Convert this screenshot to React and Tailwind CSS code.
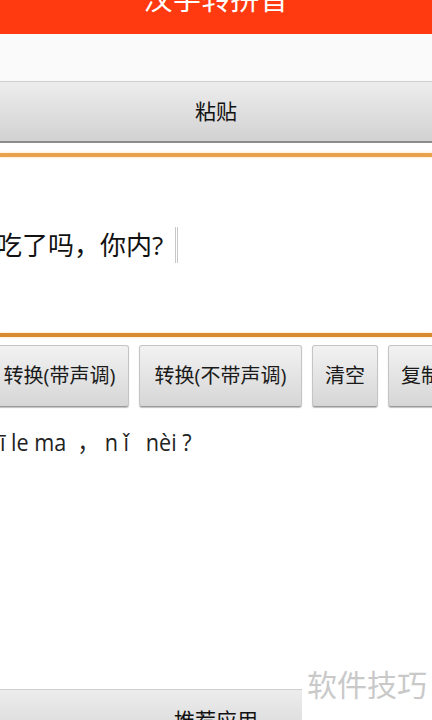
const font = { fontFamily: '"Open Sans", "Noto Sans CJK SC", sans-serif' };

function GreyButton({ children, className = '' }) {
  return (
    <div
      className={`flex h-[62px] shrink-0 items-center justify-center rounded-[3px] border border-[#c4c4c4] border-b-[#9a9a9a] bg-gradient-to-b from-[#f2f2f2] to-[#d6d6d6] text-[20px] text-[#1a1a1a] shadow-[0_1px_1px_rgba(0,0,0,0.25)] ${className}`}
    >
      {children}
    </div>
  );
}

export default function App() {
  return (
    <div className="relative h-[720px] w-[432px] overflow-hidden bg-white" style={font}>
      <div className="flex h-[751px] flex-col">
        <header className="flex h-[34px] shrink-0 justify-center overflow-hidden bg-[#ff3a10]">
          <span className="-mt-[16px] text-[29px] leading-[30px] text-white">汉字转拼音</span>
        </header>

        <div className="h-[47px] shrink-0 bg-[#fafafa]" />

        <div className="flex h-[62px] shrink-0 items-center justify-center border-t border-[#cfcfcf] border-b-2 border-b-[#8c8c8c] bg-gradient-to-b from-[#ededed] to-[#d2d2d2] text-[21px] text-[#111]">
          粘贴
        </div>

        <div className="h-[10px] shrink-0 bg-white" />
        <div className="h-[4px] shrink-0 bg-[#e9a24b] shadow-[0_0_3px_rgba(255,200,120,0.6)]" />

        <div className="flex h-[176px] shrink-0 items-center">
          <span className="-ml-[4px] text-[26px] leading-[32px] text-[#111]">吃了吗，你内?</span>
          <span className="ml-[12px] h-[36px] w-[3px] border-x border-[#c8c8c8]" />
        </div>

        <div className="h-[4px] shrink-0 bg-[#d9892f] shadow-[0_0_3px_rgba(255,200,120,0.6)]" />

        <div className="mt-[8px] -ml-[10px] flex shrink-0 gap-[10px]">
          <GreyButton className="w-[139px]">转换(带声调)</GreyButton>
          <GreyButton className="w-[163px]">转换(不带声调)</GreyButton>
          <GreyButton className="w-[66px]">清空</GreyButton>
          <GreyButton className="w-[66px]">复制</GreyButton>
        </div>

        <div className="mt-[21px] flex-1">
          <span className="inline-block origin-left scale-x-[0.9] whitespace-pre text-[24px] leading-[28px] text-[#222]">
            {'ī le ma  ， n ǐ   nèi ?'}
          </span>
        </div>

        <div className="flex h-[62px] shrink-0 items-center justify-center border-t border-[#cfcfcf] bg-gradient-to-b from-[#ededed] to-[#d2d2d2] text-[21px] text-[#111]">
          推荐应用
        </div>
      </div>

      <div className="absolute bottom-0 right-0 flex h-[60px] w-[130px] items-start justify-center bg-white pt-[8px] text-[30px] leading-[34px] text-[#c9c9c9]">
        软件技巧
      </div>
    </div>
  );
}
